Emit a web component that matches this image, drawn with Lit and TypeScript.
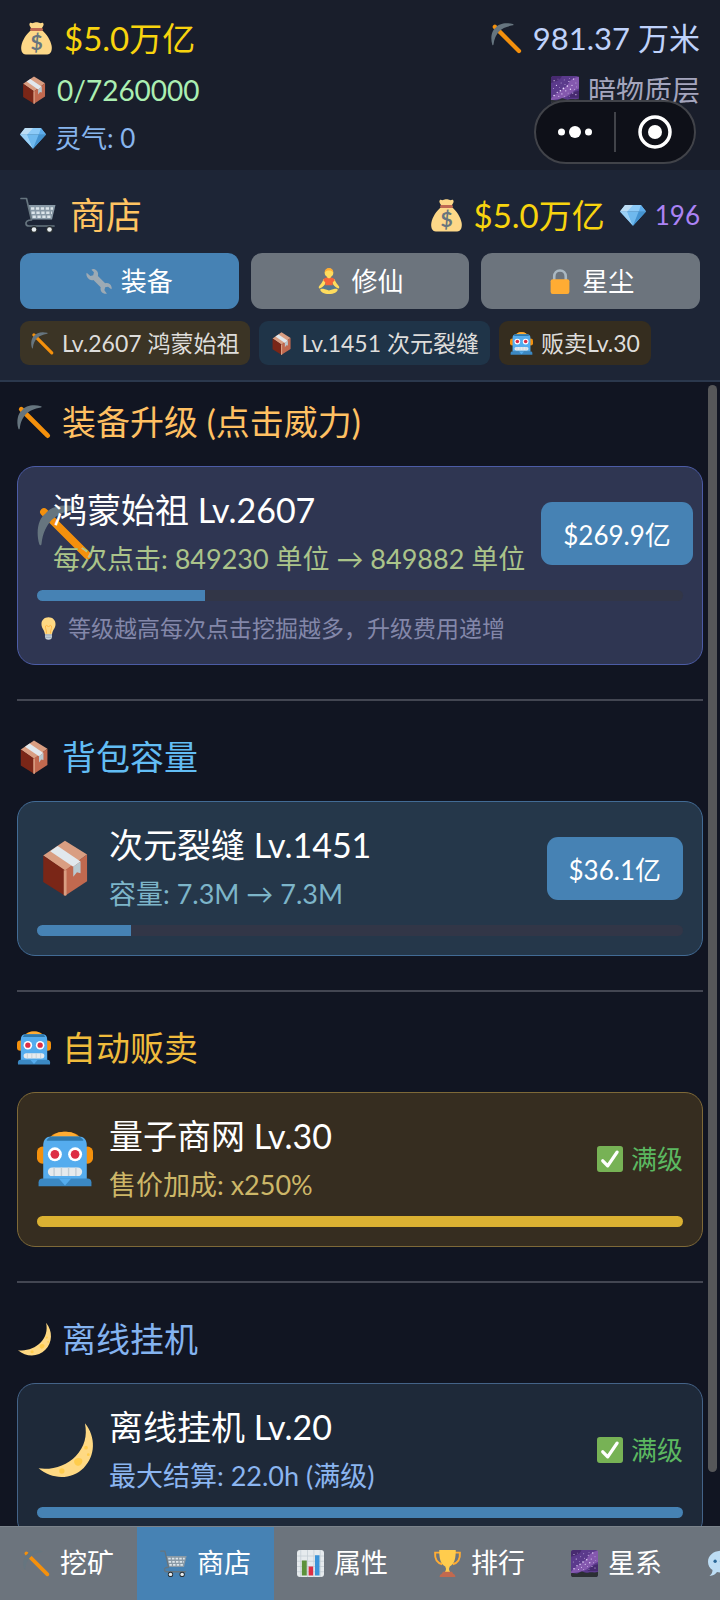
import { LitElement, html, css, svg } from "lit";
import { customElement, property } from "lit/decorators.js";

const stars = [
  [4, 6, 0.7], [9, 4, 0.5], [13, 9, 0.6], [7, 12, 0.8], [17, 5, 0.6], [23, 7, 0.7], [29, 4, 0.9], [32, 9, 0.6],
  [27, 12, 0.8], [21, 13, 1], [16, 16, 1.1], [12, 19, 1], [8, 21, 0.9], [4, 25, 1], [19, 19, 0.8], [25, 17, 0.9],
  [30, 17, 0.6], [14, 23, 0.7], [22, 22, 0.6], [10, 26, 0.7], [28, 22, 0.7], [33, 14, 0.5], [3, 16, 0.6], [32, 24, 0.7],
  [18, 11, 0.6], [24, 3, 0.5], [11, 15, 0.5], [17, 26, 0.6], [24, 26, 0.5],
];

const ICONS: Record<string, unknown> = {
  bag: svg`
    <path fill="#FDD888" d="M12 9h12c5 4 9.500 11 10.500 17 .8 4.500-.5 9.500-5 9.500h-23C2 35.500.7 30.500 1.500 26 2.500 20 7 13 12 9z"/>
    <path fill="#FDD888" d="M10.500 1.500c1-1.300 2.500 0 3.700-.3 1.400-.4 2.400-1 3.800-1s2.400.6 3.800 1c1.200.3 2.700-1 3.700.3 1 1.500-.8 3.500-2 6h-11c-1.200-2.500-3-4.500-2-6z"/>
    <rect x="11" y="6.500" width="14" height="3.200" rx="1.600" fill="#BF6952"/>
    <text x="18" y="30" text-anchor="middle" font-family="Lato, sans-serif" font-weight="700" font-size="23" fill="#67757F">$</text>`,
  pick: svg`
    <path d="M4.500 4.500 32.500 32.500" stroke="#F4900C" stroke-width="5" stroke-linecap="round"/>
    <path fill="#66757F" d="M25.500 1.300C17-1 8.500 1 5.500 5.500 1 8.500-1 17 1.500 25.200c.3.900 1.300.8 1.400-.2C3.700 18 6 13.500 9.500 9.500 13.500 6 18 4 25.300 2.700c1-.1 1.100-1.100.2-1.400z"/>`,
  box: svg`
    <path fill="#D99E82" d="M18 .5 32.200 9.300 18 20 4 10z"/>
    <path fill="#7A2617" d="M4 10 18 19.500V35.800L4 27z"/>
    <path fill="#C1694F" d="M32.200 9.300 18 19.500V35.800L32.200 26.500z"/>
    <path fill="#D99E82" d="M17.200 19.500h1.800v16l-1 .4-.8-.4z"/>
    <path fill="#E1E8ED" d="M8.500 7.200 13.300 3.800 28 13.800 23.300 17.200z"/>
    <path fill="#B9C9D0" d="M23.300 17.200 28 13.800V21.300l-2.300-.6-2.400 3z"/>`,
  gem: svg`
    <path fill="#5DADEC" d="M0 13h36L18 33z"/>
    <path fill="#8CCAF7" d="M0 13 7 4h22l7 9z"/>
    <path fill="#BDDDF4" d="M7 4h11l-8 9zM0 13 7 4l3 9z"/>
    <path fill="#5DADEC" d="M29 4l7 9H26z"/>
    <path fill="#9BD0F5" d="M0 13h10l8 20z"/>
    <path fill="#6FB9EE" d="M10 13h16l-8 20z"/>
    <path fill="#4493D0" d="M26 13h10L18 33z"/>`,
  galaxy: svg`
    <rect width="36" height="36" rx="3.500" fill="#5B3A8C"/>
    <path fill="#8458AE" d="M0 29C8 20 18 18 24 7c3-4 7-5 12-6v15c-9 3-12 10-20 12-6 2-12 2-16 4z"/>
    <path fill="#472A70" d="M2 0h12c-2 6-8 7-14 9V3.500A3.500 3.500 0 0 1 3.500 0zM36 19v9H22c3-5 8-8 14-9z"/>
    ${stars.map(([x, y, r]) => svg`<circle cx=${x} cy=${y} r=${r} fill="#EBDDFF"/>`)}
    <path fill="#2B2F33" d="M0 31c4-1 6 1 9 0s4-3 7-2 5 2 8 1 8 1 12-1v3.500a3.500 3.500 0 0 1-3.500 3.500h-29A3.500 3.500 0 0 1 0 32.500z"/>`,
  cart: svg`
    <path fill="#8899A6" d="M8 8h27.500l-3.500 14.500H11.500z"/>
    <path stroke="#DCE5EA" stroke-width="2.400" stroke-dasharray="3.300 1.600" d="M11 11.500h22M11.500 15.700h20.500M12.500 19.800h18.500"/>
    <path fill="none" stroke="#66757F" stroke-width="1.700" stroke-linecap="round" stroke-linejoin="round" d="M1 1.500h5.500l5 21.500c-4 0-6 1.500-5.500 4 .3 1.500 1.500 2 3 2H34"/>
    <circle cx="14" cy="32.500" r="3.500" fill="#292F33"/><circle cx="29.500" cy="32.500" r="3.500" fill="#292F33"/>
    <circle cx="14" cy="32.500" r="2.300" fill="#E8EEF1"/><circle cx="29.500" cy="32.500" r="2.300" fill="#E8EEF1"/>`,
  wrench: svg`
    <path fill="#9DAAB4" d="M10.500 1.500c5 1 7 5 6 9.500l10 10c4-1 8 1 9 5.500.3 1.300 0 2.300-.4 3l-4.600-3.700-4 1-1 4 3.500 4.700c-5.500 1-10-3.500-8.700-9l-10-10C5.500 18 1.500 14 .6 9.800.3 8.500.7 7.500 1 6.500l5 4.500 4-1 1-4-3.500-3.500c1-.8 1.700-1.200 3-1z"/>`,
  lotus: svg`
    <path fill="#FFDC5D" d="M10.500 15C9 20 6 23 4.500 25c-1.500 2-.5 4 1.500 3 3.500-2 6-4 7.500-8zM25.500 15c1.500 5 4.500 8 6 10 1.500 2 .5 4-1.500 3-3.500-2-6-4-7.500-8z"/>
    <circle cx="18" cy="6.800" r="6" fill="#FFDC5D"/>
    <path fill="#FFAC33" d="M12 6.500C12 2 14.500 0 18 0s6 2 6 6.500c-2-2.500-3-3-6-3s-4 .5-6 3z"/>
    <path fill="#FFDC5D" d="M15.500 11h5v4h-5z"/>
    <path fill="#F4643A" d="M10 17c.5-3 3-4 5-4l3 1.500 3-1.500c2 0 4.500 1 5 4l-3 3v6H13v-6z"/>
    <path fill="#55788F" d="M13 24h10l7 5-8 4h-8l-8-4z"/>
    <path fill="#FFDC5D" d="M6 30c0-2 4-2 12 1 8-3 12-3 12-1 0 3-5 6-12 6S6 33 6 30z"/>`,
  lock: svg`
    <path fill="none" stroke="#AAB8C2" stroke-width="3.600" d="M10 18v-6c0-5 3.500-8.500 8-8.500s8 3.500 8 8.500v6"/>
    <rect x="5" y="15.500" width="26" height="20.500" rx="3" fill="#FFAC33"/>`,
  robot: svg`
    <ellipse cx="18" cy="5" rx="9.500" ry="4.500" fill="#F4900C"/>
    <path fill="#FFAC33" d="M10 3.500C12 1 15 .5 18 .5s6 .5 8 3z"/>
    <rect x="0" y="10" width="7" height="11" rx="3.500" fill="#F4900C"/><rect x="29" y="10" width="7" height="11" rx="3.500" fill="#F4900C"/>
    <path fill="#55ACEE" d="M4 9c0-3.500 2-5.500 5-5.500h18c3 0 5 2 5 5.500v22H4z"/>
    <path fill="#2F78AC" d="M6.500 5.500C7.500 4 8.500 3.500 10 3.500h16c1.500 0 2.500.5 3.500 2l.3.800H6.200z"/>
    <path fill="#3B88C3" d="M3.500 30.500h29c1.500 0 2.500 1 2.500 2.500v2.500H1V33c0-1.500 1-2.500 2.500-2.500z"/>
    <path fill="#55ACEE" d="M14 30.500h8L18 35z"/>
    <circle cx="11.500" cy="15" r="4.500" fill="#FFF"/><circle cx="24.500" cy="15" r="4.500" fill="#FFF"/>
    <circle cx="11.500" cy="15" r="2.800" fill="#DD2E44"/><circle cx="24.500" cy="15" r="2.800" fill="#DD2E44"/>
    <rect x="7" y="23.500" width="22" height="5.500" rx="2.700" fill="#E6EAED"/>
    <path stroke="#C3CDD4" stroke-width=".9" d="M11 23.500V29M15.700 23.500V29M20.300 23.500V29M25 23.500V29"/>`,
  bulb: svg`
    <path fill="#FFD983" d="M18 .5c6.500 0 11 4.500 11 10.500 0 6.500-4.500 9-5.500 16h-11C11.500 20 7 17.500 7 11 7 5 11.500.5 18 .5z"/>
    <path fill="none" stroke="#FFAC33" stroke-width="1.200" d="M15 26c0-6-3-10-1.500-12s3 0 4.500 1.500c1.500-1.500 3-3.500 4.500-1.500S21 20 21 26"/>
    <path fill="#CCD6DD" d="M12.500 27h11v4c0 3-2 4.700-5.500 4.700S12.500 34 12.500 31z"/>
    <path stroke="#8899A6" stroke-width="1" d="M12.500 29.500h11M13 32.300h10"/>`,
  moon: svg`
    <path fill="#FFD983" d="M30.800.8C38 9.500 37.700 21.800 30 29.500 22.500 37 10 37.500 1 29.800c9 1.200 18-1.800 24-8C30.500 16 32.500 9 30.800.8z"/>
    <path fill="#FFCC4D" d="M24.500 24c2-1.600 5-.6 4.700 1.200-.2 1.800-2 3.600-3.700 2.800-1.600-.8-2.200-2.900-1-4z"/>
    <circle cx="31.500" cy="16.500" r="1.200" fill="#FFCC4D"/><circle cx="16" cy="31.500" r="1.700" fill="#FFCC4D"/><circle cx="33" cy="21" r=".9" fill="#FFCC4D"/>`,
  check: svg`
    <rect width="36" height="36" rx="4" fill="#77B255"/>
    <path fill="none" stroke="#FFF" stroke-width="4.600" stroke-linecap="round" stroke-linejoin="round" d="M8 20.500 14.800 27.500 27.800 8.500"/>`,
  chart: svg`
    <rect width="36" height="36" rx="4" fill="#E6EBEE"/>
    <path stroke="#C3CDD4" stroke-width="1" d="M0 8h36M0 15h36M0 22h36M0 29h36M5 0v36M14 0v36M22.500 0v36M31 0v36"/>
    <path fill="#5C913B" d="M6.500 14h6.500v20H6.500z"/><path fill="#DD2E44" d="M15.500 22h6v12h-6z"/><path fill="#3B94D9" d="M24 7h6v27h-6z"/>`,
  trophy: svg`
    <path fill="none" stroke="#FFAC33" stroke-width="2.600" d="M8 3.500H1.500C1 10 3 17 11 19M28 3.500h6.500C35 10 33 17 25 19"/>
    <path fill="#FFCC4D" d="M7 0h22c0 10-1 18-8 22l-1 3c0 2 1 4 3 6H13c2-2 3-4 3-6l-1-3C8 18 7 10 7 0z"/>
    <path fill="#C1694F" d="M12 29h12l1.500 2.500c2 .5 3 2 3 4.500h-21c0-2.500 1-4 3-4.500z"/>`,
  chat: svg`
    <path fill="#BDDDF4" d="M18 1c10 0 18 6 18 14.500S28 30 18 30c-2 0-4-.3-6-.8C10 32 7 34 2 34.500c3-2.500 4-5 4-8C2 24 0 20 0 15.500 0 7 8 1 18 1z"/>
    <circle cx="9.500" cy="15" r="2.200" fill="#2A6797"/><circle cx="18" cy="15" r="2.200" fill="#2A6797"/><circle cx="26.500" cy="15" r="2.200" fill="#2A6797"/>`,
};

@customElement("game-icon")
export class GameIcon extends LitElement {
  @property() name = "";

  static styles = css`
    :host { display: block; flex: none; width: 1em; height: 1em; }
    .glyph { display: block; width: 100%; height: 100%; overflow: visible; }
  `;

  render() {
    return html`<svg class="glyph" viewBox="0 0 36 36" fill="none" aria-hidden="true">${ICONS[this.name]}</svg>`;
  }
}

interface Upgrade {
  kind: string;
  icon: string;
  heading: string;
  name: string;
  effect: string;
  progress: number;
  price?: string;
  tip?: string;
}

const UPGRADES: Upgrade[] = [
  { kind: "power", icon: "pick", heading: "装备升级 (点击威力)", name: "鸿蒙始祖 Lv.2607", effect: "每次点击: 849230 单位 → 849882 单位", progress: 26, price: "$269.9亿", tip: "等级越高每次点击挖掘越多，升级费用递增" },
  { kind: "pack", icon: "box", heading: "背包容量", name: "次元裂缝 Lv.1451", effect: "容量: 7.3M → 7.3M", progress: 14.5, price: "$36.1亿" },
  { kind: "sell", icon: "robot", heading: "自动贩卖", name: "量子商网 Lv.30", effect: "售价加成: x250%", progress: 100 },
  { kind: "idle", icon: "moon", heading: "离线挂机", name: "离线挂机 Lv.20", effect: "最大结算: 22.0h (满级)", progress: 100 },
];

@customElement("upgrade-section")
export class UpgradeSection extends LitElement {
  @property({ attribute: false }) item!: Upgrade;

  static styles = css`
    :host { display: block; }
    .heading { display: flex; align-items: center; gap: 11px; margin: 0 0 20px; font-size: 34px; line-height: 48px; font-weight: 400; white-space: nowrap; color: var(--accent); }
    .card { box-sizing: border-box; border: 1px solid var(--edge); border-radius: 18px; background: var(--fill); padding: 19px; }
    .row { display: flex; align-items: center; gap: 16px; }
    .art { flex: 0 1 56px; min-width: 0; font-size: 56px; }
    .info { flex: 1 0 auto; position: relative; white-space: nowrap; }
    .name { margin: 0 0 4px; font-size: 34px; line-height: 48px; font-weight: 400; color: #fff; }
    .effect { margin: 0; font-size: 27px; line-height: 42px; color: var(--note); }
    .buy { flex: none; height: 63px; padding: 0 22px; border: 0; border-radius: 11px; background: #4682b4; color: #fff; font: inherit; font-size: 26px; }
    .label { padding-bottom: 4px; }
    .full { display: flex; align-items: center; gap: 8px; flex: none; font-size: 26px; color: #5cb860; }
    .track { height: 11px; margin-top: 10px; border-radius: 6px; background: #323647; overflow: hidden; }
    .done { height: 100%; background: var(--bar); }
    .tip { display: flex; align-items: center; gap: 8px; margin: 10px 0 0; font-size: 23px; line-height: 34px; color: #8387a9; }
    .power { --accent: #ffc062; --edge: #4c5ca6; --fill: #2f3652; --note: #abc48a; --bar: #4682b4; }
    .pack { --accent: #62bdf5; --edge: #426b95; --fill: #25374a; --note: #7db5c9; --bar: #4682b4; }
    .sell { --accent: #f0bb3c; --edge: #7e6938; --fill: #362d20; --note: #cdb768; --bar: #dbb132; }
    .idle { --accent: #84b3f0; --edge: #446388; --fill: #1e2939; --note: #8bb5f0; --bar: #4682b4; }
  `;

  render() {
    const u = this.item;
    return html`<section class=${u.kind}>
      <h2 class="heading"><game-icon name=${u.icon}></game-icon>${u.heading}</h2>
      <div class="card">
        <div class="row">
          <div class="art"><game-icon name=${u.icon}></game-icon></div>
          <div class="info">
            <h3 class="name">${u.name}</h3>
            <p class="effect">${u.effect}</p>
          </div>
          ${u.price
            ? html`<button class="buy">${u.price}</button>`
            : html`<span class="full"><game-icon name="check"></game-icon><span class="label">满级</span></span>`}
        </div>
        <div class="track" role="progressbar" aria-label=${u.name} aria-valuenow=${u.progress}>
          <div class="done" style="width:${u.progress}%"></div>
        </div>
        ${u.tip ? html`<p class="tip"><game-icon name="bulb"></game-icon>${u.tip}</p>` : ""}
      </div>
    </section>`;
  }
}

@customElement("app-root")
export class AppRoot extends LitElement {
  static styles = css`
    :host { display: flex; flex-direction: column; height: 100vh; overflow: hidden; position: relative; background: #111522; font-family: Lato, "Noto Sans CJK SC", sans-serif; color: #fff; }
    button { font: inherit; color: inherit; border: 0; }
    .label { padding-bottom: 4px; }
    .stats { flex: none; display: flex; flex-direction: column; gap: 10px; padding: 16px 20px 14px; background: #191e2b; }
    .line { display: flex; justify-content: space-between; white-space: nowrap; }
    .stat { display: flex; align-items: center; }
    .xl { font-size: 33px; line-height: 44px; gap: 11px; }
    .lg { font-size: 31px; line-height: 44px; gap: 11px; }
    .md { font-size: 28px; line-height: 40px; gap: 9px; }
    .sm { font-size: 26px; line-height: 36px; gap: 9px; }
    .gold { color: #f8d40e; }
    .green { color: #abefb2; }
    .sky { color: #87b5ee; }
    .pale { color: #bfd2fb; }
    .mute { color: #a4a5bd; }
    .violet { color: #ac83f5; }
    .capsule { position: absolute; top: 100px; right: 24px; box-sizing: border-box; width: 162px; height: 64px; display: flex; align-items: center; border: 2px solid #414349; border-radius: 32px; background: #0e1018; }
    .cap-btn { flex: 1; height: 100%; padding: 0; background: none; display: grid; place-items: center; }
    .split { width: 2px; height: 40px; background: #414349; }
    .shop { flex: none; padding: 19px 20px 15px; background: #1d2536; border-bottom: 2px solid #2b384d; }
    .top { display: flex; justify-content: space-between; align-items: center; white-space: nowrap; }
    .title { display: flex; align-items: center; gap: 14px; margin: 0; font-size: 36px; line-height: 52px; font-weight: 400; color: #ffc462; }
    .wallet { display: flex; align-items: center; gap: 15px; }
    .tabs { display: grid; grid-template-columns: repeat(3, 1fr); gap: 12px; margin: 12px 0; }
    .tab { display: flex; align-items: center; justify-content: center; gap: 9px; height: 56px; padding: 0; border-radius: 11px; background: #6c747d; font-size: 26px; }
    .tab.on, .item.on { background: #4682b4; }
    .chips { display: flex; gap: 9px; white-space: nowrap; }
    .chip { display: flex; align-items: center; gap: 8px; padding: 0 11px; border-radius: 9px; font-size: 23px; line-height: 44px; color: #dedddb; }
    .brown { background: #3b3425; }
    .teal { background: #1f3448; }
    .olive { background: #352d1f; }
    .list { flex: 1; min-height: 0; overflow: hidden; position: relative; padding: 16px 17px 0; }
    .rule { height: 2px; margin: 34px 0 32px; border: 0; background: #434652; }
    .thumb { position: absolute; top: 3px; right: 3px; width: 9px; height: 95%; border-radius: 5px; background: #565759; }
    .nav { flex: none; display: flex; overflow: hidden; background: #6c747d; border-top: 1px solid #7b838b; }
    .item { flex: none; display: flex; align-items: center; gap: 10px; height: 73px; padding: 0 23px; background: #6c747d; font-size: 27px; }
  `;

  render() {
    const stat = (icon: string, text: string, cls: string) =>
      html`<span class="stat ${cls}"><game-icon name=${icon}></game-icon>${text}</span>`;
    const tabs = [["wrench", "装备"], ["lotus", "修仙"], ["lock", "星尘"]];
    const chips = [["pick", "Lv.2607 鸿蒙始祖", "brown"], ["box", "Lv.1451 次元裂缝", "teal"], ["robot", "贩卖Lv.30", "olive"]];
    const nav = [["pick", "挖矿"], ["cart", "商店"], ["chart", "属性"], ["trophy", "排行"], ["galaxy", "星系"]];
    return html`
      <header class="stats">
        <div class="line">${stat("bag", "$5.0万亿", "xl gold")}${stat("pick", "981.37 万米", "lg pale")}</div>
        <div class="line">${stat("box", "0/7260000", "md green")}${stat("galaxy", "暗物质层", "md mute")}</div>
        <div class="line">${stat("gem", "灵气: 0", "sm sky")}</div>
      </header>
      <div class="shop">
        <div class="top">
          <h1 class="title"><game-icon name="cart"></game-icon>商店</h1>
          <div class="wallet">${stat("bag", "$5.0万亿", "xl gold")}${stat("gem", "196", "sm violet")}</div>
        </div>
        <div class="tabs">
          ${tabs.map(([icon, label], i) => html`<button class="tab ${i === 0 ? "on" : ""}"><game-icon name=${icon}></game-icon><span class="label">${label}</span></button>`)}
        </div>
        <div class="chips">
          ${chips.map(([icon, label, tone]) => html`<span class="chip ${tone}"><game-icon name=${icon}></game-icon>${label}</span>`)}
        </div>
      </div>
      <main class="list">
        ${UPGRADES.map((u, i) => html`${i ? html`<hr class="rule" />` : ""}<upgrade-section .item=${u}></upgrade-section>`)}
        <div class="thumb"></div>
      </main>
      <nav class="nav">
        ${nav.map(([icon, label], i) => html`<button class="item ${i === 1 ? "on" : ""}"><game-icon name=${icon}></game-icon><span class="label">${label}</span></button>`)}
        <button class="item" aria-label="聊天"><game-icon name="chat"></game-icon></button>
      </nav>
      <div class="capsule">
        <button class="cap-btn" aria-label="更多">
          <svg width="34" height="12" viewBox="0 0 34 12" fill="#fff"><circle cx="3.500" cy="6" r="3.500"/><circle cx="17" cy="6" r="6"/><circle cx="30.500" cy="6" r="3.500"/></svg>
        </button>
        <span class="split"></span>
        <button class="cap-btn" aria-label="关闭">
          <svg width="34" height="34" viewBox="0 0 34 34"><circle cx="17" cy="17" r="15" fill="none" stroke="#fff" stroke-width="3.500"/><circle cx="17" cy="17" r="7" fill="#fff"/></svg>
        </button>
      </div>
    `;
  }
}
